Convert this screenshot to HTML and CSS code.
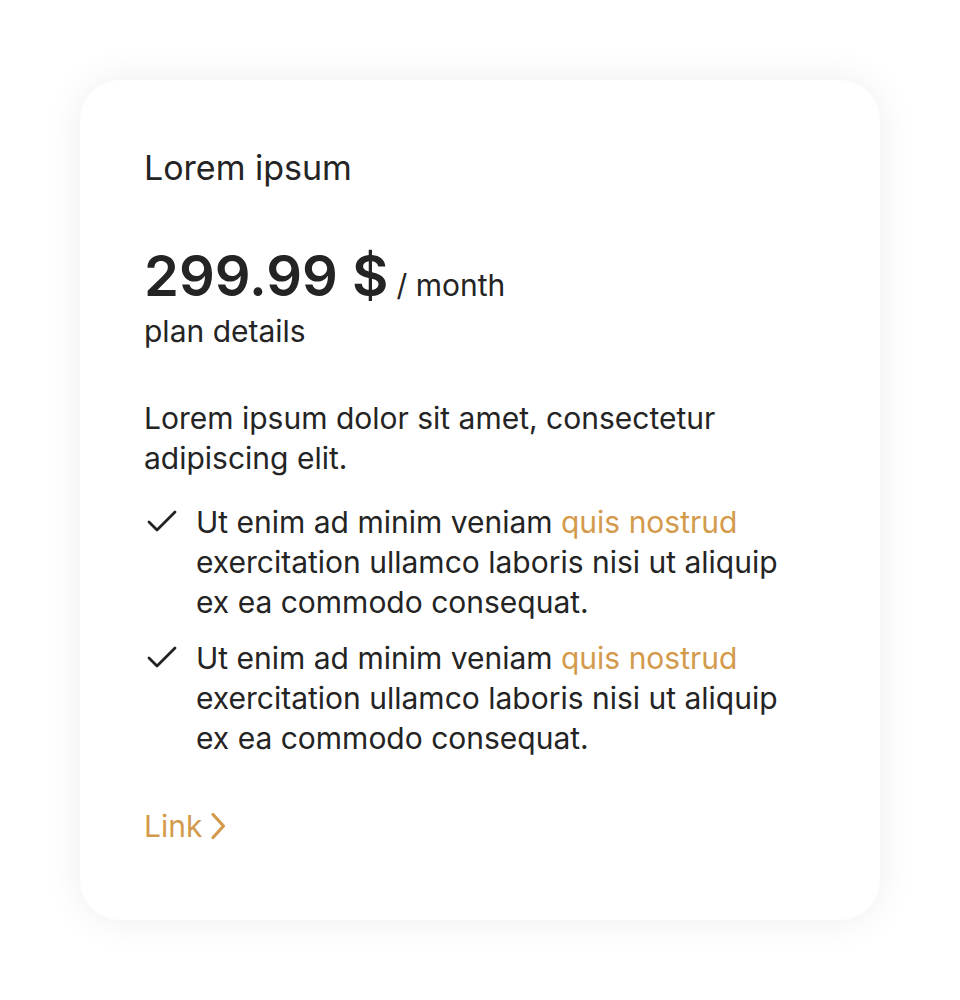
FILE: index.html
```html
<!DOCTYPE html>
<html>
<head>
<meta charset="utf-8">
<link rel="stylesheet" href="styles.css">
</head>
<body>
<div class="page">
  <div class="card">
    <h2 class="title">Lorem ipsum</h2>
    <div class="price-block">
      <div class="price"><span class="amount">299.99 $</span><span class="period">/ month</span></div>
      <div class="plan">plan details</div>
    </div>
    <p class="desc">Lorem ipsum dolor sit amet, consectetur adipiscing elit.</p>
    <ul class="features">
      <li class="feature">
        <svg class="check" viewBox="0 0 40 40" width="40" height="40"><path d="M5 20 L13 28 L31 10" fill="none" stroke="#222" stroke-width="2.8" stroke-linecap="round" stroke-linejoin="round"/></svg>
        <span>Ut enim ad minim veniam <span class="accent">quis nostrud</span> exercitation ullamco laboris nisi ut aliquip ex ea commodo consequat.</span>
      </li>
      <li class="feature">
        <svg class="check" viewBox="0 0 40 40" width="40" height="40"><path d="M5 20 L13 28 L31 10" fill="none" stroke="#222" stroke-width="2.8" stroke-linecap="round" stroke-linejoin="round"/></svg>
        <span>Ut enim ad minim veniam <span class="accent">quis nostrud</span> exercitation ullamco laboris nisi ut aliquip ex ea commodo consequat.</span>
      </li>
    </ul>
    <a class="link" href="#"><span>Link</span><svg class="chev" viewBox="0 0 20 40" width="20" height="40"><path d="M5 8.5 L15.5 20 L5 31.5" fill="none" stroke="#D39A4B" stroke-width="3.2" stroke-linecap="round" stroke-linejoin="round"/></svg></a>
  </div>
</div>
</body>
</html>
```

FILE: styles.css
```css
* { box-sizing: border-box; }
html, body { margin: 0; padding: 0; background: #fff; }
body { font-family: Inter, "Noto Sans", sans-serif; color: #242424; }
.page { padding: 80px; }
.card {
  width: 800px;
  height: 840px;
  background: #fff;
  border-radius: 40px;
  box-shadow: 0 0 40px rgba(0,0,0,0.07);
  padding: 64px;
  display: flex;
  flex-direction: column;
}
.title { margin: 0; font-size: 34px; font-weight: 400; line-height: 48px; }
.price-block { margin-top: 52px; }
.price { display: flex; align-items: baseline; gap: 8px; height: 64px; }
.amount { font-size: 56px; font-weight: 600; line-height: 64px; }
.period { font-size: 30px; line-height: 40px; }
.plan { font-size: 30px; line-height: 40px; margin-top: 3px; }
.desc { margin: 47px 0 0; font-size: 30px; line-height: 40px; }
.features { list-style: none; margin: 24px 0 0; padding: 0; display: flex; flex-direction: column; gap: 16px; }
.feature { display: flex; gap: 12px; font-size: 30px; line-height: 40px; }
.check { flex: none; }
.accent { color: #D39A4B; }
.link { margin-top: 48px; color: #D39A4B; text-decoration: none; font-size: 30px; line-height: 40px; display: inline-flex; align-items: center; gap: 6px; align-self: flex-start; }
.chev { flex: none; }
```
